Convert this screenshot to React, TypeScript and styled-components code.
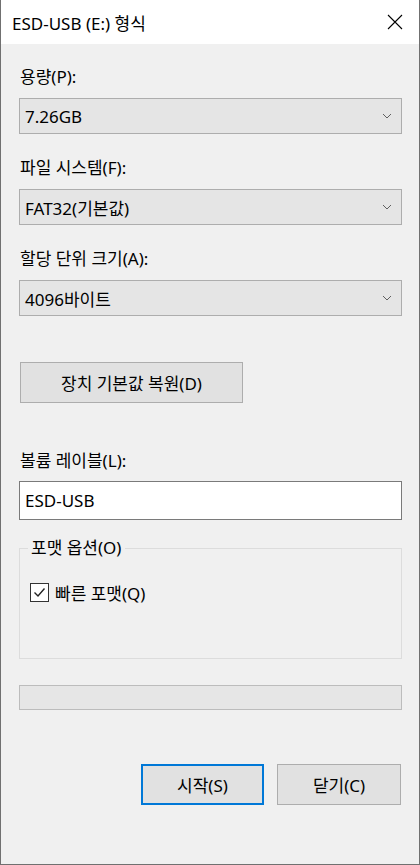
import React from 'react';
import styled, { createGlobalStyle } from 'styled-components';

const GlobalStyle = createGlobalStyle`
  html, body {
    margin: 0;
    padding: 0;
    background: #f0f0f0;
  }
  body {
    font-family: 'Noto Sans', 'Noto Sans CJK KR', sans-serif;
    color: #000;
  }
`;

const Window = styled.div`
  box-sizing: border-box;
  width: 420px;
  height: 865px;
  background: #f0f0f0;
  border: 1px solid #707070;
  border-top: none;
  display: flex;
  flex-direction: column;
`;

const TitleBar = styled.div`
  height: 44px;
  background: #fff;
  display: flex;
  align-items: center;
  justify-content: space-between;
  padding: 0 16px 0 11px;
  font-size: 17px;
`;

const Body = styled.div`
  padding: 0 17px 0 18px;
  display: flex;
  flex-direction: column;
  font-size: 17px;
`;

const Label = styled.div<{ $top: number }>`
  margin-top: ${({ $top }) => $top}px;
  height: 20px;
  line-height: 20px;
  padding-left: 1px;
`;

const Combo = styled.div`
  margin-top: 11px;
  height: 36px;
  box-sizing: border-box;
  background: #e5e5e5;
  border: 1px solid #adadad;
  display: flex;
  align-items: center;
  justify-content: space-between;
  padding: 0 9px 0 5px;
`;

const Button = styled.div<{ $default?: boolean; $width: number }>`
  box-sizing: border-box;
  width: ${({ $width }) => $width}px;
  height: 41px;
  background: #e1e1e1;
  border: ${({ $default }) => ($default ? '2px solid #0078d7' : '1px solid #adadad')};
  display: flex;
  align-items: center;
  justify-content: center;
`;

const ResetRow = styled.div`
  margin-top: 46px;
  padding-left: 1px;
`;

const TextBox = styled.div`
  margin-top: 10px;
  height: 39px;
  box-sizing: border-box;
  background: #fff;
  border: 1px solid #7a7a7a;
  display: flex;
  align-items: center;
  padding-left: 5px;
`;

const Group = styled.fieldset`
  margin: 18px 0 0;
  height: 121px;
  box-sizing: border-box;
  border: 1px solid #dcdcdc;
  padding: 0 10px;
`;

const Legend = styled.legend`
  padding: 0 4px 0 3px;
  margin-left: -2px;
  line-height: 20px;
`;

const CheckRow = styled.div`
  margin-top: 22px;
  display: flex;
  align-items: center;
  gap: 6px;
`;

const CheckBox = styled.div`
  width: 19px;
  height: 19px;
  box-sizing: border-box;
  border: 1px solid #333;
  background: #fff;
  display: flex;
  align-items: center;
  justify-content: center;
`;

const Progress = styled.div`
  margin-top: 26px;
  height: 25px;
  box-sizing: border-box;
  background: #e6e6e6;
  border: 1px solid #bcbcbc;
`;

const Footer = styled.div`
  margin-top: 54px;
  display: flex;
  justify-content: flex-end;
  gap: 13px;
  padding-right: 1px;
`;

const Chevron = () => (
  <svg width="10" height="6" viewBox="0 0 10 6">
    <path d="M1 1 L5 5 L9 1" fill="none" stroke="#606060" strokeWidth="1" />
  </svg>
);

const CloseIcon = () => (
  <svg width="16" height="16" viewBox="0 0 16 16">
    <path d="M1 1 L15 15 M15 1 L1 15" stroke="#000" strokeWidth="1.1" />
  </svg>
);

const Check = () => (
  <svg width="15" height="15" viewBox="0 0 15 15">
    <path d="M2.5 7.5 L6 11 L12.5 3.5" fill="none" stroke="#222" strokeWidth="1.4" />
  </svg>
);

const fields = [
  { label: '용량(P):', value: '7.26GB' },
  { label: '파일 시스템(F):', value: 'FAT32(기본값)' },
  { label: '할당 단위 크기(A):', value: '4096바이트' },
];

export default function App() {
  return (
    <>
      <GlobalStyle />
      <Window>
        <TitleBar>
          <span>ESD-USB (E:) 형식</span>
          <CloseIcon />
        </TitleBar>
        <Body>
          {fields.map((f, i) => (
            <React.Fragment key={f.label}>
              <Label $top={i === 0 ? 23 : 24}>{f.label}</Label>
              <Combo>
                <span>{f.value}</span>
                <Chevron />
              </Combo>
            </React.Fragment>
          ))}
          <ResetRow>
            <Button $width={223}>장치 기본값 복원(D)</Button>
          </ResetRow>
          <Label $top={48}>볼륨 레이블(L):</Label>
          <TextBox>ESD-USB</TextBox>
          <Group>
            <Legend>포맷 옵션(O)</Legend>
            <CheckRow>
              <CheckBox>
                <Check />
              </CheckBox>
              <span>빠른 포맷(Q)</span>
            </CheckRow>
          </Group>
          <Progress />
          <Footer>
            <Button $default $width={123}>시작(S)</Button>
            <Button $width={124}>닫기(C)</Button>
          </Footer>
        </Body>
      </Window>
    </>
  );
}
